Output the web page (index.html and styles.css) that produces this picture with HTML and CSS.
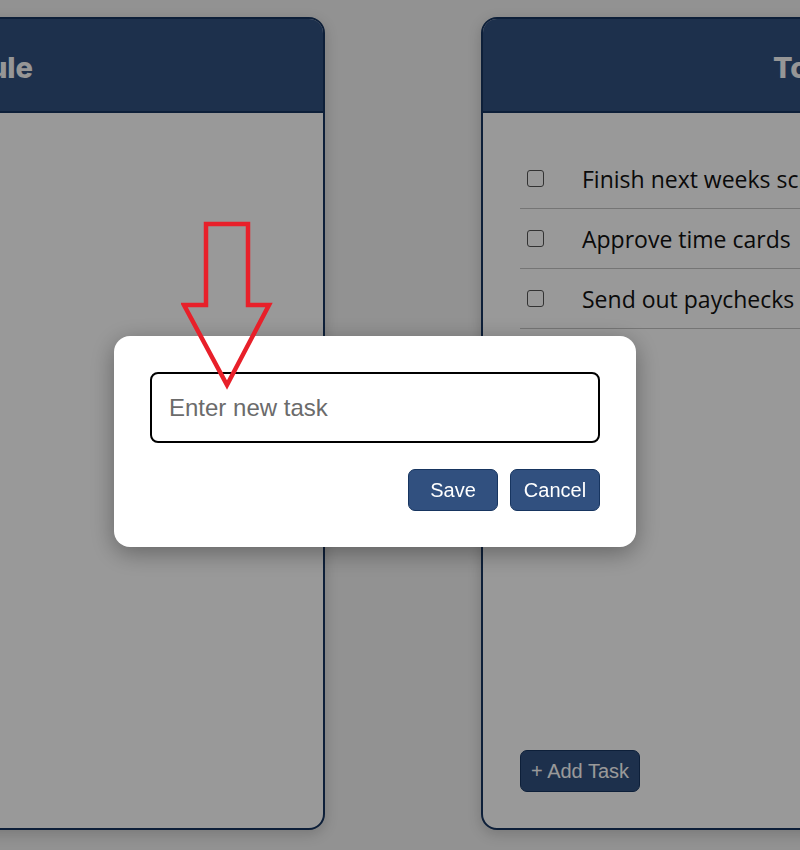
FILE: index.html
```html
<!DOCTYPE html>
<html lang="en">
<head>
<meta charset="utf-8">
<title>Task board</title>
<link rel="stylesheet" href="styles.css">
</head>
<body>
<main class="board">
  <section class="card card--left">
    <header class="card-header card-header--end"><h2 class="card-title">Schedule</h2></header>
    <div class="card-body"></div>
  </section>
  <section class="card card--right">
    <header class="card-header card-header--start"><h2 class="card-title">To Do</h2></header>
    <div class="card-body">
      <ul class="task-list">
        <li class="task"><input type="checkbox" class="task-check"><span class="task-text">Finish next weeks schedule</span></li>
        <li class="task"><input type="checkbox" class="task-check"><span class="task-text">Approve time cards</span></li>
        <li class="task"><input type="checkbox" class="task-check"><span class="task-text">Send out paychecks</span></li>
      </ul>
      <button class="add-btn">+ Add Task</button>
    </div>
  </section>
</main>

<div class="overlay">
  <div class="modal">
    <input class="modal-input" type="text" placeholder="Enter new task">
    <div class="modal-actions">
      <button class="modal-btn">Save</button>
      <button class="modal-btn">Cancel</button>
    </div>
  </div>
</div>

<svg class="annotation-arrow" width="100" height="175" viewBox="0 0 100 175" aria-hidden="true">
  <polygon points="25,3 67,3 67,84 88,84 46,164 3,84 25,84" fill="none" stroke="#e8202a" stroke-width="4.5" stroke-linejoin="miter"/>
</svg>
</body>
</html>
```

FILE: styles.css
```css
* { box-sizing: border-box; }

html, body {
  margin: 0;
  padding: 0;
  width: 800px;
  height: 850px;
  overflow: hidden;
  background: #f3f3f3;
  font-family: "Liberation Sans", Arial, sans-serif;
}

.board {
  display: flex;
  gap: 156px;
  padding-top: 17px;
  margin-left: -395px;
}

.card {
  flex: 0 0 720px;
  height: 813px;
  display: flex;
  flex-direction: column;
  background: #ffffff;
  border: 2px solid #173560;
  border-radius: 16px;
  overflow: hidden;
  box-shadow: 0 4px 14px rgba(0, 0, 0, 0.18);
}

.card-header {
  height: 94px;
  background: #31507f;
  border-bottom: 2px solid #173560;
  display: flex;
  align-items: center;
  padding-top: 4px;
}

.card-header--end { justify-content: flex-end; padding-right: 290px; }
.card-header--start { justify-content: flex-start; padding-left: 290px; }

.card-title {
  margin: 0;
  font-family: Inter, "Liberation Sans", sans-serif;
  font-weight: 800;
  font-size: 29px;
  color: #fbfbfb;
}

.card-body {
  flex: 1;
  display: flex;
  flex-direction: column;
  padding: 36px 36px 36px 37px;
}

.task-list {
  list-style: none;
  margin: 0;
  padding: 0;
}

.task {
  height: 60px;
  display: flex;
  align-items: center;
  border-bottom: 1px solid #c4c4c4;
  padding-left: 7px;
}

.task-check {
  appearance: none;
  -webkit-appearance: none;
  flex: 0 0 17px;
  width: 17px;
  height: 17px;
  margin: 0 38px 0 0;
  border: 1.5px solid #555;
  border-radius: 3px;
  background: #fff;
}

.task-text {
  font-family: "Open Sans", "Noto Sans", sans-serif;
  font-size: 23px;
  color: #111;
  white-space: nowrap;
}

.add-btn {
  margin-top: auto;
  align-self: flex-start;
  height: 42px;
  padding: 0 10px;
  background: #31507f;
  color: #fff;
  border: 1px solid #173560;
  border-radius: 7px;
  font-family: "Liberation Sans", Arial, sans-serif;
  font-size: 20px;
}

.overlay {
  position: fixed;
  inset: 0;
  background: rgba(0, 0, 0, 0.4);
  padding: 336px 0 0 114px;
}

.modal {
  width: 522px;
  background: #fff;
  border-radius: 16px;
  padding: 36px;
  box-shadow: 0 6px 24px rgba(0, 0, 0, 0.35);
}

.modal-input {
  display: block;
  width: 450px;
  height: 71px;
  border: 2px solid #000;
  border-radius: 8px;
  padding: 0 17px;
  font-family: "Liberation Sans", Arial, sans-serif;
  font-size: 24px;
  color: #222;
  outline: none;
}

.modal-input::placeholder { color: #6b6b6b; }

.modal-actions {
  display: flex;
  justify-content: flex-end;
  gap: 12px;
  margin-top: 26px;
}

.modal-btn {
  width: 90px;
  height: 42px;
  background: #31507f;
  color: #fff;
  border: 1px solid #173560;
  border-radius: 7px;
  font-family: "Liberation Sans", Arial, sans-serif;
  font-size: 20px;
  padding: 0;
}

.annotation-arrow {
  position: fixed;
  left: 181px;
  top: 221px;
}
```
